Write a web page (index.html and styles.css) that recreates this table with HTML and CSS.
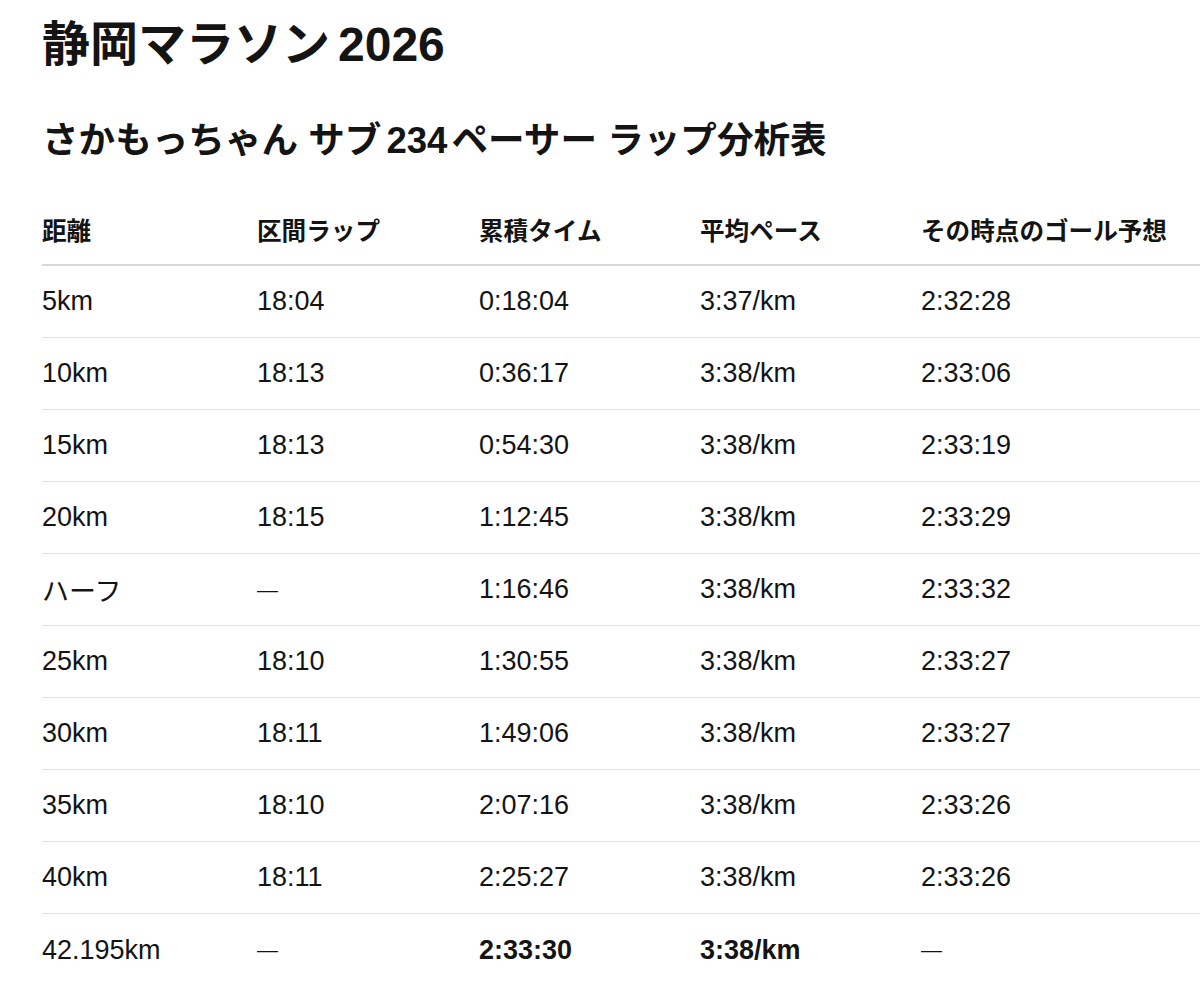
FILE: index.html
```html
<!DOCTYPE html>
<html lang="ja">
<head>
<meta charset="utf-8">
<title>静岡マラソン2026</title>
<link rel="stylesheet" href="styles.css">
</head>
<body>
<main class="page">
  <h1 class="title">静岡マラソン<span class="num">2026</span></h1>
  <h2 class="subtitle">さかもっちゃん サブ<span class="num">234</span>ペーサー ラップ分析表</h2>
  <div class="table" role="table">
    <div class="row head" role="row">
      <div role="columnheader">距離</div>
      <div role="columnheader">区間ラップ</div>
      <div role="columnheader">累積タイム</div>
      <div role="columnheader">平均ペース</div>
      <div role="columnheader">その時点のゴール予想</div>
    </div>
    <div class="row" role="row"><div>5km</div><div>18:04</div><div>0:18:04</div><div>3:37/km</div><div>2:32:28</div></div>
    <div class="row" role="row"><div>10km</div><div>18:13</div><div>0:36:17</div><div>3:38/km</div><div>2:33:06</div></div>
    <div class="row" role="row"><div>15km</div><div>18:13</div><div>0:54:30</div><div>3:38/km</div><div>2:33:19</div></div>
    <div class="row" role="row"><div>20km</div><div>18:15</div><div>1:12:45</div><div>3:38/km</div><div>2:33:29</div></div>
    <div class="row" role="row"><div>ハーフ</div><div class="dash">—</div><div>1:16:46</div><div>3:38/km</div><div>2:33:32</div></div>
    <div class="row" role="row"><div>25km</div><div>18:10</div><div>1:30:55</div><div>3:38/km</div><div>2:33:27</div></div>
    <div class="row" role="row"><div>30km</div><div>18:11</div><div>1:49:06</div><div>3:38/km</div><div>2:33:27</div></div>
    <div class="row" role="row"><div>35km</div><div>18:10</div><div>2:07:16</div><div>3:38/km</div><div>2:33:26</div></div>
    <div class="row" role="row"><div>40km</div><div>18:11</div><div>2:25:27</div><div>3:38/km</div><div>2:33:26</div></div>
    <div class="row last" role="row"><div>42.195km</div><div class="dash">—</div><div class="strong">2:33:30</div><div class="strong">3:38/km</div><div class="dash">—</div></div>
  </div>
</main>
</body>
</html>
```
FILE: styles.css
```css
html, body {
  margin: 0;
  padding: 0;
  background: #ffffff;
}
body {
  font-family: "Liberation Sans", "Noto Sans CJK JP", sans-serif;
  color: #141414;
}
.page {
  padding: 16px 0 0 42px;
}
.title {
  margin: 0;
  font-size: 48px;
  line-height: 58px;
  font-weight: 700;
}
.title .num {
  margin-left: 8px;
}
.subtitle {
  margin: 46px 0 0;
  font-size: 36.6px;
  line-height: 42px;
  font-weight: 700;
}
.subtitle .num {
  margin: 0 4px 0 5px;
}
.table {
  margin-top: 31px;
}
.row {
  display: grid;
  grid-template-columns: 215px 222px 221px 221px 1fr;
  align-items: center;
  height: 72px;
  box-sizing: border-box;
  border-bottom: 1px solid #e4e4e4;
  font-size: 27px;
}
.row.head {
  height: 73px;
  border-bottom: 2px solid #d8d8d8;
  font-size: 24.6px;
  font-weight: 700;
}
.row.last {
  border-bottom: none;
}
.strong {
  font-weight: 700;
}
.dash {
  font-size: 21px;
}
```
